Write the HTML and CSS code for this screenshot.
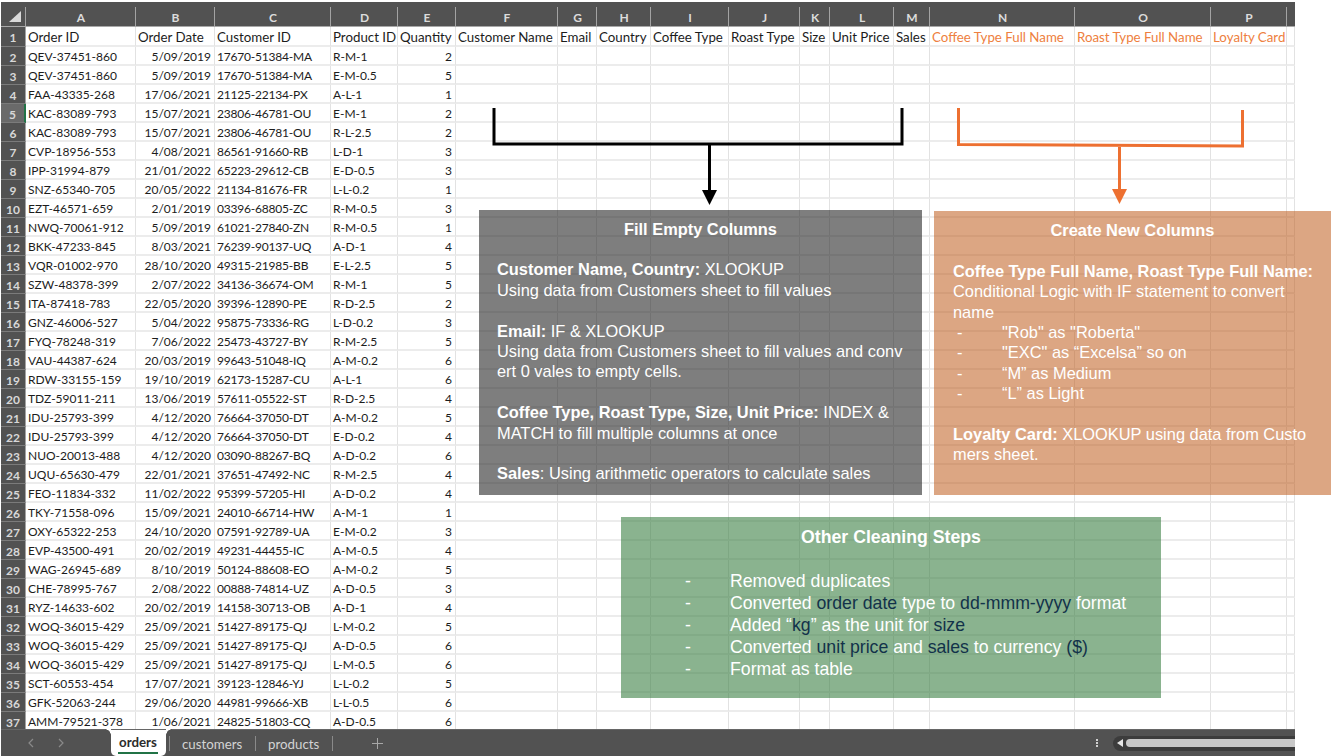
FILE: index.html
```html
<!doctype html>
<html>
  <head>
    <title>Coffee orders - data cleaning</title>
    <meta name="viewport" content="width=device-width, initial-scale=1.0" />
    <link rel="stylesheet" href="styles.css">
  </head>
  <body>
    <div class="sheet">
      <div class="grid">
        <table>
          <colgroup>
            <col class="c-head"><col class="c-a"><col class="c-b"><col class="c-c"><col class="c-d"><col class="c-e"><col class="c-f"><col class="c-g"><col class="c-h"><col class="c-i"><col class="c-j"><col class="c-k"><col class="c-l"><col class="c-m"><col class="c-n"><col class="c-o"><col class="c-p"><col class="c-q">
          </colgroup>
          <thead>
            <tr>
              <th class="corner"><svg viewBox="0 0 12 11" width="12" height="11"><path d="M0 11 12 0v11z" fill="#d9d9d9"/></svg></th>
              <th>A</th><th>B</th><th>C</th><th>D</th><th>E</th><th>F</th><th>G</th><th>H</th><th>I</th><th>J</th><th>K</th><th>L</th><th>M</th><th>N</th><th>O</th><th>P</th><th class="blank"></th>
            </tr>
          </thead>
          <tbody>
            <tr class="fields"><th>1</th><td>Order ID</td><td>Order Date</td><td>Customer ID</td><td>Product ID</td><td>Quantity</td><td>Customer Name</td><td>Email</td><td>Country</td><td>Coffee Type</td><td>Roast Type</td><td>Size</td><td>Unit Price</td><td>Sales</td><td class="new">Coffee Type Full Name</td><td class="new">Roast Type Full Name</td><td class="new">Loyalty Card</td><td></td></tr>
            <tr><th>2</th><td>QEV-37451-860</td><td class="num">5/09/2019</td><td>17670-51384-MA</td><td>R-M-1</td><td class="num">2</td><td></td><td></td><td></td><td></td><td></td><td></td><td></td><td></td><td></td><td></td><td></td><td></td></tr>
            <tr><th>3</th><td>QEV-37451-860</td><td class="num">5/09/2019</td><td>17670-51384-MA</td><td>E-M-0.5</td><td class="num">5</td><td></td><td></td><td></td><td></td><td></td><td></td><td></td><td></td><td></td><td></td><td></td><td></td></tr>
            <tr><th>4</th><td>FAA-43335-268</td><td class="num">17/06/2021</td><td>21125-22134-PX</td><td>A-L-1</td><td class="num">1</td><td></td><td></td><td></td><td></td><td></td><td></td><td></td><td></td><td></td><td></td><td></td><td></td></tr>
            <tr class="active"><th>5</th><td>KAC-83089-793</td><td class="num">15/07/2021</td><td>23806-46781-OU</td><td>E-M-1</td><td class="num">2</td><td></td><td></td><td></td><td></td><td></td><td></td><td></td><td></td><td></td><td></td><td></td><td></td></tr>
            <tr><th>6</th><td>KAC-83089-793</td><td class="num">15/07/2021</td><td>23806-46781-OU</td><td>R-L-2.5</td><td class="num">2</td><td></td><td></td><td></td><td></td><td></td><td></td><td></td><td></td><td></td><td></td><td></td><td></td></tr>
            <tr><th>7</th><td>CVP-18956-553</td><td class="num">4/08/2021</td><td>86561-91660-RB</td><td>L-D-1</td><td class="num">3</td><td></td><td></td><td></td><td></td><td></td><td></td><td></td><td></td><td></td><td></td><td></td><td></td></tr>
            <tr><th>8</th><td>IPP-31994-879</td><td class="num">21/01/2022</td><td>65223-29612-CB</td><td>E-D-0.5</td><td class="num">3</td><td></td><td></td><td></td><td></td><td></td><td></td><td></td><td></td><td></td><td></td><td></td><td></td></tr>
            <tr><th>9</th><td>SNZ-65340-705</td><td class="num">20/05/2022</td><td>21134-81676-FR</td><td>L-L-0.2</td><td class="num">1</td><td></td><td></td><td></td><td></td><td></td><td></td><td></td><td></td><td></td><td></td><td></td><td></td></tr>
            <tr><th>10</th><td>EZT-46571-659</td><td class="num">2/01/2019</td><td>03396-68805-ZC</td><td>R-M-0.5</td><td class="num">3</td><td></td><td></td><td></td><td></td><td></td><td></td><td></td><td></td><td></td><td></td><td></td><td></td></tr>
            <tr><th>11</th><td>NWQ-70061-912</td><td class="num">5/09/2019</td><td>61021-27840-ZN</td><td>R-M-0.5</td><td class="num">1</td><td></td><td></td><td></td><td></td><td></td><td></td><td></td><td></td><td></td><td></td><td></td><td></td></tr>
            <tr><th>12</th><td>BKK-47233-845</td><td class="num">8/03/2021</td><td>76239-90137-UQ</td><td>A-D-1</td><td class="num">4</td><td></td><td></td><td></td><td></td><td></td><td></td><td></td><td></td><td></td><td></td><td></td><td></td></tr>
            <tr><th>13</th><td>VQR-01002-970</td><td class="num">28/10/2020</td><td>49315-21985-BB</td><td>E-L-2.5</td><td class="num">5</td><td></td><td></td><td></td><td></td><td></td><td></td><td></td><td></td><td></td><td></td><td></td><td></td></tr>
            <tr><th>14</th><td>SZW-48378-399</td><td class="num">2/07/2022</td><td>34136-36674-OM</td><td>R-M-1</td><td class="num">5</td><td></td><td></td><td></td><td></td><td></td><td></td><td></td><td></td><td></td><td></td><td></td><td></td></tr>
            <tr><th>15</th><td>ITA-87418-783</td><td class="num">22/05/2020</td><td>39396-12890-PE</td><td>R-D-2.5</td><td class="num">2</td><td></td><td></td><td></td><td></td><td></td><td></td><td></td><td></td><td></td><td></td><td></td><td></td></tr>
            <tr><th>16</th><td>GNZ-46006-527</td><td class="num">5/04/2022</td><td>95875-73336-RG</td><td>L-D-0.2</td><td class="num">3</td><td></td><td></td><td></td><td></td><td></td><td></td><td></td><td></td><td></td><td></td><td></td><td></td></tr>
            <tr><th>17</th><td>FYQ-78248-319</td><td class="num">7/06/2022</td><td>25473-43727-BY</td><td>R-M-2.5</td><td class="num">5</td><td></td><td></td><td></td><td></td><td></td><td></td><td></td><td></td><td></td><td></td><td></td><td></td></tr>
            <tr><th>18</th><td>VAU-44387-624</td><td class="num">20/03/2019</td><td>99643-51048-IQ</td><td>A-M-0.2</td><td class="num">6</td><td></td><td></td><td></td><td></td><td></td><td></td><td></td><td></td><td></td><td></td><td></td><td></td></tr>
            <tr><th>19</th><td>RDW-33155-159</td><td class="num">19/10/2019</td><td>62173-15287-CU</td><td>A-L-1</td><td class="num">6</td><td></td><td></td><td></td><td></td><td></td><td></td><td></td><td></td><td></td><td></td><td></td><td></td></tr>
            <tr><th>20</th><td>TDZ-59011-211</td><td class="num">13/06/2019</td><td>57611-05522-ST</td><td>R-D-2.5</td><td class="num">4</td><td></td><td></td><td></td><td></td><td></td><td></td><td></td><td></td><td></td><td></td><td></td><td></td></tr>
            <tr><th>21</th><td>IDU-25793-399</td><td class="num">4/12/2020</td><td>76664-37050-DT</td><td>A-M-0.2</td><td class="num">5</td><td></td><td></td><td></td><td></td><td></td><td></td><td></td><td></td><td></td><td></td><td></td><td></td></tr>
            <tr><th>22</th><td>IDU-25793-399</td><td class="num">4/12/2020</td><td>76664-37050-DT</td><td>E-D-0.2</td><td class="num">4</td><td></td><td></td><td></td><td></td><td></td><td></td><td></td><td></td><td></td><td></td><td></td><td></td></tr>
            <tr><th>23</th><td>NUO-20013-488</td><td class="num">4/12/2020</td><td>03090-88267-BQ</td><td>A-D-0.2</td><td class="num">6</td><td></td><td></td><td></td><td></td><td></td><td></td><td></td><td></td><td></td><td></td><td></td><td></td></tr>
            <tr><th>24</th><td>UQU-65630-479</td><td class="num">22/01/2021</td><td>37651-47492-NC</td><td>R-M-2.5</td><td class="num">4</td><td></td><td></td><td></td><td></td><td></td><td></td><td></td><td></td><td></td><td></td><td></td><td></td></tr>
            <tr><th>25</th><td>FEO-11834-332</td><td class="num">11/02/2022</td><td>95399-57205-HI</td><td>A-D-0.2</td><td class="num">4</td><td></td><td></td><td></td><td></td><td></td><td></td><td></td><td></td><td></td><td></td><td></td><td></td></tr>
            <tr><th>26</th><td>TKY-71558-096</td><td class="num">15/09/2021</td><td>24010-66714-HW</td><td>A-M-1</td><td class="num">1</td><td></td><td></td><td></td><td></td><td></td><td></td><td></td><td></td><td></td><td></td><td></td><td></td></tr>
            <tr><th>27</th><td>OXY-65322-253</td><td class="num">24/10/2020</td><td>07591-92789-UA</td><td>E-M-0.2</td><td class="num">3</td><td></td><td></td><td></td><td></td><td></td><td></td><td></td><td></td><td></td><td></td><td></td><td></td></tr>
            <tr><th>28</th><td>EVP-43500-491</td><td class="num">20/02/2019</td><td>49231-44455-IC</td><td>A-M-0.5</td><td class="num">4</td><td></td><td></td><td></td><td></td><td></td><td></td><td></td><td></td><td></td><td></td><td></td><td></td></tr>
            <tr><th>29</th><td>WAG-26945-689</td><td class="num">8/10/2019</td><td>50124-88608-EO</td><td>A-M-0.2</td><td class="num">5</td><td></td><td></td><td></td><td></td><td></td><td></td><td></td><td></td><td></td><td></td><td></td><td></td></tr>
            <tr><th>30</th><td>CHE-78995-767</td><td class="num">2/08/2022</td><td>00888-74814-UZ</td><td>A-D-0.5</td><td class="num">3</td><td></td><td></td><td></td><td></td><td></td><td></td><td></td><td></td><td></td><td></td><td></td><td></td></tr>
            <tr><th>31</th><td>RYZ-14633-602</td><td class="num">20/02/2019</td><td>14158-30713-OB</td><td>A-D-1</td><td class="num">4</td><td></td><td></td><td></td><td></td><td></td><td></td><td></td><td></td><td></td><td></td><td></td><td></td></tr>
            <tr><th>32</th><td>WOQ-36015-429</td><td class="num">25/09/2021</td><td>51427-89175-QJ</td><td>L-M-0.2</td><td class="num">5</td><td></td><td></td><td></td><td></td><td></td><td></td><td></td><td></td><td></td><td></td><td></td><td></td></tr>
            <tr><th>33</th><td>WOQ-36015-429</td><td class="num">25/09/2021</td><td>51427-89175-QJ</td><td>A-D-0.5</td><td class="num">6</td><td></td><td></td><td></td><td></td><td></td><td></td><td></td><td></td><td></td><td></td><td></td><td></td></tr>
            <tr><th>34</th><td>WOQ-36015-429</td><td class="num">25/09/2021</td><td>51427-89175-QJ</td><td>L-M-0.5</td><td class="num">6</td><td></td><td></td><td></td><td></td><td></td><td></td><td></td><td></td><td></td><td></td><td></td><td></td></tr>
            <tr><th>35</th><td>SCT-60553-454</td><td class="num">17/07/2021</td><td>39123-12846-YJ</td><td>L-L-0.2</td><td class="num">5</td><td></td><td></td><td></td><td></td><td></td><td></td><td></td><td></td><td></td><td></td><td></td><td></td></tr>
            <tr><th>36</th><td>GFK-52063-244</td><td class="num">29/06/2020</td><td>44981-99666-XB</td><td>L-L-0.5</td><td class="num">6</td><td></td><td></td><td></td><td></td><td></td><td></td><td></td><td></td><td></td><td></td><td></td><td></td></tr>
            <tr><th>37</th><td>AMM-79521-378</td><td class="num">1/06/2021</td><td>24825-51803-CQ</td><td>A-D-0.5</td><td class="num">6</td><td></td><td></td><td></td><td></td><td></td><td></td><td></td><td></td><td></td><td></td><td></td><td></td></tr>
          </tbody>
        </table>
      </div>

      <div class="tabbar">
        <div class="tab-nav">
          <svg viewBox="0 0 6 10" width="6" height="10"><path d="M5 1 1 5l4 4" fill="none" stroke="#8a8a8a" stroke-width="1.2"/></svg>
          <svg viewBox="0 0 6 10" width="6" height="10"><path d="M1 1l4 4-4 4" fill="none" stroke="#8a8a8a" stroke-width="1.2"/></svg>
        </div>
        <div class="tab tab-active"><span>orders</span></div>
        <div class="tab-sep"></div>
        <div class="tab tab-customers">customers</div>
        <div class="tab-sep"></div>
        <div class="tab tab-products">products</div>
        <div class="tab-sep"></div>
        <svg class="tab-add" viewBox="0 0 11 11" width="11" height="11"><path d="M5.500 0v11M0 5.500h11" stroke="#a8a8a8" stroke-width="1"/></svg>
        <div class="tab-dots"><i></i><i></i><i></i></div>
        <div class="scroller">
          <svg viewBox="0 0 6 8" width="6" height="8"><path d="M6 0v8L0 4z" fill="#e6e6e6"/></svg>
          <div class="thumb"></div>
        </div>
      </div>
    </div>

    <!-- connectors from the header columns down to the note boxes -->
    <svg class="connectors" viewBox="0 0 1333 756" width="1333" height="756">
      <path d="M494 108v36h408v-36M709.500 144v48" fill="none" stroke="#000" stroke-width="3"/>
      <path d="M702 190h15l-7.500 15z" fill="#000"/>
      <path d="M958.500 108v36.500l284 1.500v-36M1119.500 145v46" fill="none" stroke="#ed7031" stroke-width="3"/>
      <path d="M1112 189h15l-7.500 15z" fill="#ed7031"/>
    </svg>

    <section class="note note-fill">
      <h2>Fill Empty Columns</h2>
      <p><b>Customer Name, Country:</b> XLOOKUP<br>Using data from Customers sheet to fill values</p>
      <p><b>Email:</b> IF &amp; XLOOKUP<br>Using data from Customers sheet to fill values and conv<br>ert 0 vales to empty cells.</p>
      <p><b>Coffee Type, Roast Type, Size, Unit Price:</b> INDEX &amp;<br>MATCH to fill multiple columns at once</p>
      <p><b>Sales</b>: Using arithmetic operators to calculate sales</p>
    </section>

    <section class="note note-new">
      <h2>Create New Columns</h2>
      <p class="lead"><b>Coffee Type Full Name, Roast Type Full Name:</b><br>Conditional Logic with IF statement to convert<br>name</p>
      <ul>
        <li>"Rob" as "Roberta"</li>
        <li>"EXC" as “Excelsa” so on</li>
        <li>“M” as Medium</li>
        <li>“L” as Light</li>
      </ul>
      <p><b>Loyalty Card:</b> XLOOKUP using data from Custo<br>mers sheet.</p>
    </section>

    <section class="note note-other">
      <h2>Other Cleaning Steps</h2>
      <ul>
        <li>Removed duplicates</li>
        <li>Converted <em>order date</em> type to <em>dd-mmm-yyyy</em> format</li>
        <li>Added “<em>kg</em>” as the unit for <em>size</em></li>
        <li>Converted <em>unit price</em> and <em>sales</em> to currency <em>($)</em></li>
        <li>Format as table</li>
      </ul>
    </section>
  </body>
</html>
```

FILE: styles.css
```css
html,
body {
  margin: 0;
  height: 756px;
  overflow: hidden;
  background: #fff;
}
body {
  position: relative;
}

.sheet {
  width: 1294px;
  height: 754px;
  margin: 2px 0 0 1px;
  display: flex;
  flex-direction: column;
  font-family: "Lato", "Liberation Sans", sans-serif;
  font-size: 12px;
}
.grid {
  height: 727px;
  overflow: hidden;
}

table {
  width: 1294px;
  table-layout: fixed;
  border-collapse: separate;
  border-spacing: 0;
}
.c-head { width: 25px; }
.c-a { width: 110px; }
.c-b { width: 79px; }
.c-c { width: 116px; }
.c-d { width: 67px; }
.c-e { width: 58px; }
.c-f { width: 102px; }
.c-g { width: 39px; }
.c-h { width: 54px; }
.c-i { width: 78px; }
.c-j { width: 71px; }
.c-k { width: 30px; }
.c-l { width: 64px; }
.c-m { width: 36px; }
.c-n { width: 145px; }
.c-o { width: 136px; }
.c-p { width: 76px; }
.c-q { width: 8px; }

thead th {
  height: 25px;
  box-sizing: border-box;
  padding: 7px 0 0;
  background: linear-gradient(#a3a3a3, #a3a3a3) right bottom / 1px 19px no-repeat #525252;
  border-bottom: 1px solid #a8a8a8;
  color: #dcdcdc;
  font-weight: 700;
  font-size: 12px;
  text-align: center;
}
thead th.blank {
  background: #525252;
}
thead th.corner {
  padding: 4px 0 0 8px;
  text-align: left;
  line-height: 0;
}

tbody th {
  height: 19px;
  box-sizing: border-box;
  padding: 2px 0 0;
  background: #525252;
  border-bottom: 1px solid #7b7b7b;
  border-right: 1px solid #a3a3a3;
  color: #d8d8d8;
  font-weight: 700;
  font-size: 12px;
  text-align: center;
}
tbody td {
  height: 19px;
  box-sizing: border-box;
  padding: 2px 0 0 2px;
  border-right: 1px solid #e2e2e2;
  border-bottom: 2px solid #ececec;
  color: #1c1c1c;
  white-space: nowrap;
  overflow: hidden;
}
tbody td:nth-child(4) {
  letter-spacing: -0.2px;
}
tbody td.num {
  padding: 2px 3px 0 0;
  text-align: right;
}
tr.fields th,
tr.fields td {
  height: 20px;
}
tr.fields td {
  font-size: 13.300px;
  letter-spacing: 0;
}
tbody td.new {
  color: #ee8040;
}
tr.active th {
  background: #6a6a6a;
  border-right: 2px solid #217346;
}

.tabbar {
  height: 27px;
  display: flex;
  align-items: center;
  background: #525252;
  border-top: 1px solid #666;
  box-sizing: border-box;
  color: #d4d4d4;
  font-size: 13.300px;
}
.tab-nav {
  display: flex;
  gap: 24px;
  margin-left: 27px;
  width: 83px;
}
.tab {
  height: 26px;
  box-sizing: border-box;
  padding-top: 6px;
}
.tab-active {
  position: relative;
  width: 55px;
  padding: 4px 0 0 7px;
  background: #fff;
  border-radius: 0 0 5px 5px;
  font-weight: 700;
}
/* the bar curves away from the active tab at its top corners */
.tab-active::before,
.tab-active::after {
  content: "";
  position: absolute;
  top: -1px;
  width: 6px;
  height: 6px;
}
.tab-active::before {
  left: -6px;
  background: radial-gradient(circle at 0 100%, #525252 5.500px, #fff 6px);
}
.tab-active::after {
  right: -6px;
  background: radial-gradient(circle at 100% 100%, #525252 5.500px, #fff 6px);
}
.tab-active span {
  display: inline-block;
  height: 18px;
  padding: 0 1px;
  border-bottom: 2px solid #217346;
  color: #2c2c2c;
}
.tab-sep {
  width: 1px;
  height: 15px;
  background: #8a8a8a;
  margin-left: 3px;
}
.tab-customers {
  margin-left: 12px;
  width: 70px;
}
.tab-products {
  margin-left: 12px;
  width: 61px;
}
.tab-add {
  margin-left: 39px;
}
.tab-dots {
  display: flex;
  flex-direction: column;
  gap: 1px;
  margin-left: auto;
}
.tab-dots i {
  width: 2px;
  height: 2px;
  background: #d0d0d0;
}
.scroller {
  width: 182px;
  height: 15px;
  margin-left: 15px;
  display: flex;
  align-items: center;
  gap: 3px;
  padding-left: 4px;
  box-sizing: border-box;
  background: #3c3c3c;
  border-radius: 8px 0 0 8px;
}
.thumb {
  flex: 1;
  height: 8px;
  background: #c8c8c8;
  border-radius: 4px 0 0 4px;
}

.connectors {
  position: absolute;
  top: 0;
  left: 0;
  pointer-events: none;
}

.note {
  position: absolute;
  box-sizing: border-box;
  font-family: "Liberation Sans", Arial, sans-serif;
  font-size: 16.400px;
  line-height: 20.400px;
  color: #fff;
}
.note h2 {
  margin: 0 0 20.400px;
  font-size: 16.400px;
  font-weight: 700;
  text-align: center;
}
.note p {
  margin: 0 0 20.400px;
  white-space: nowrap;
}
.note p.lead {
  margin: 0;
}
.note ul {
  margin: 0 0 20.400px;
  padding: 0;
  list-style: none;
}
.note li {
  position: relative;
  padding-left: 49px;
  white-space: nowrap;
}
.note li::before {
  content: "-";
  position: absolute;
  left: 4px;
}

.note-fill {
  left: 479px;
  top: 210px;
  width: 443px;
  height: 285px;
  padding: 8.500px 18px;
  background: rgba(40, 40, 40, 0.6);
}
.note-new {
  left: 934px;
  top: 211px;
  width: 397px;
  height: 284px;
  padding: 9px 19px;
  background: rgba(192, 92, 30, 0.55);
}
.note-other {
  left: 621px;
  top: 517px;
  width: 540px;
  height: 181px;
  padding: 9px 64px;
  background: rgba(60, 128, 68, 0.6);
  font-size: 17.700px;
  line-height: 22px;
}
.note-other h2 {
  font-size: 17.700px;
  margin-bottom: 22px;
}
.note-other li {
  padding-left: 45px;
}
.note-other li::before {
  left: 0;
}
.note-other em {
  font-style: normal;
  color: #12324a;
}
```
